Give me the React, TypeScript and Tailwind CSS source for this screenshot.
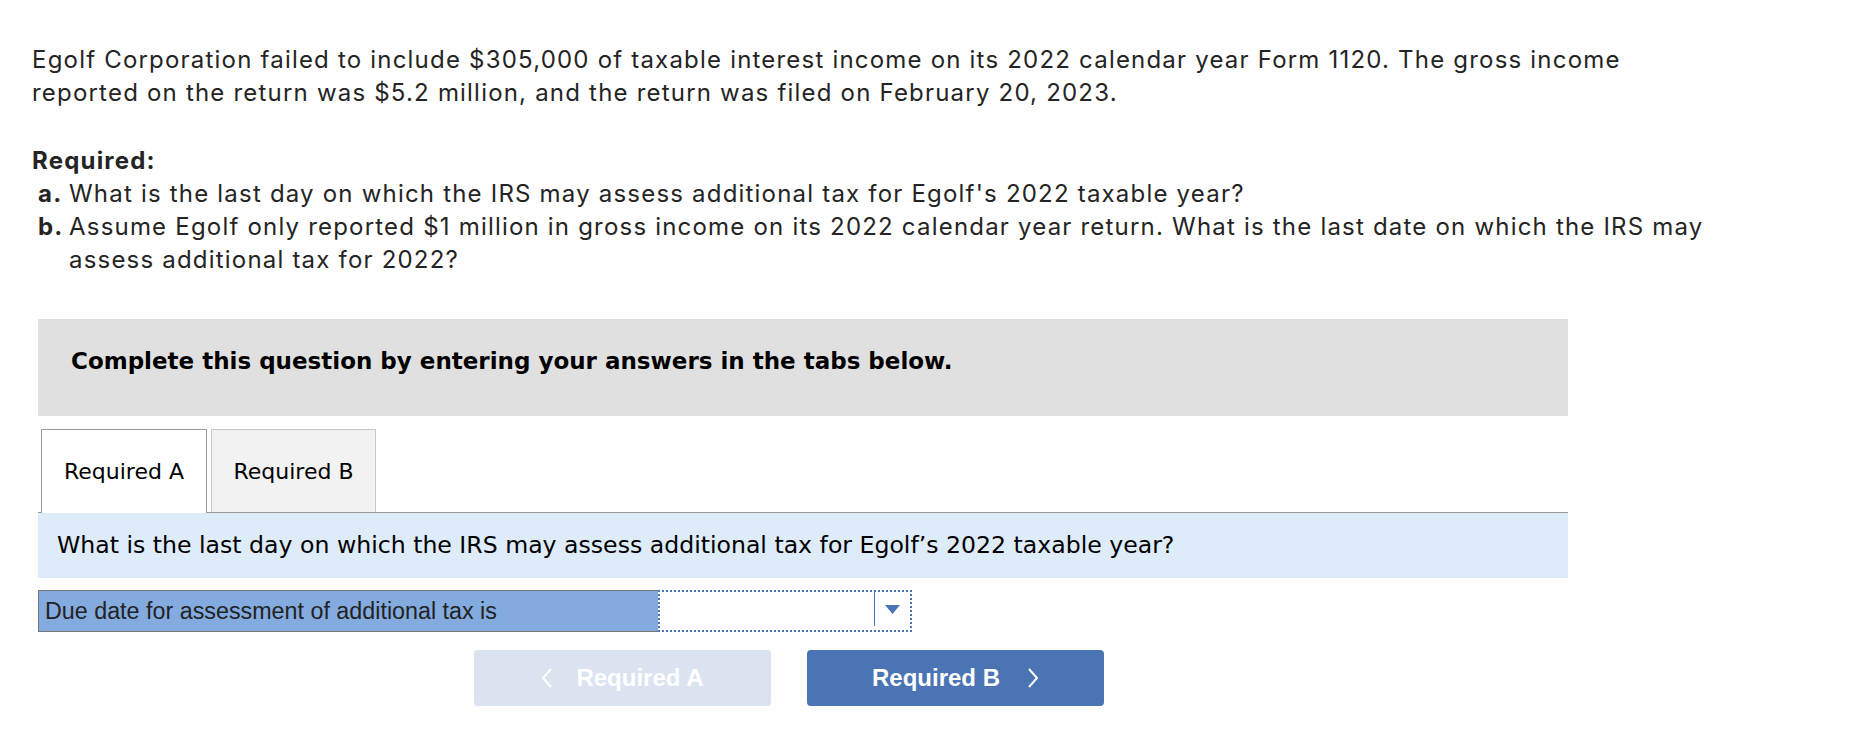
export default function App() {
  return (
    <div className="min-h-screen bg-white pl-[32px] pt-[43px] text-[#242424]">
      {/* question text */}
      <div className="w-[1686px] font-['Inter',sans-serif] text-[24px] leading-[33px] tracking-[1.2px]">
        <p>
          Egolf Corporation failed to include $305,000 of taxable interest income on its 2022 calendar year Form 1120. The gross income
          reported on the return was $5.2 million, and the return was filed on February 20, 2023.
        </p>
        <p className="mt-[35px] font-bold">Required:</p>
        <div className="flex">
          <span className="w-[37px] shrink-0 pl-[6px] font-bold">a.</span>
          <span>What is the last day on which the IRS may assess additional tax for Egolf's 2022 taxable year?</span>
        </div>
        <div className="flex">
          <span className="w-[37px] shrink-0 pl-[6px] font-bold">b.</span>
          <span>
            Assume Egolf only reported $1 million in gross income on its 2022 calendar year return. What is the last date on which the IRS may
            assess additional tax for 2022?
          </span>
        </div>
      </div>

      <div className="ml-[6px] mt-[43px] w-[1530px]">
        <div className="h-[97px] bg-[#e0e0e0] pl-[33px] pt-[27px] font-['DejaVu_Sans',sans-serif] text-[23px] font-bold leading-[30px] text-black">
          Complete this question by entering your answers in the tabs below.
        </div>

        {/* tabs */}
        <div className="mt-[13px] flex items-end gap-[4px] border-b border-[#999] pl-[3px] font-['DejaVu_Sans',sans-serif] text-[22px] text-black">
          <div className="-mb-px flex h-[84px] w-[166px] items-center justify-center border-x border-t border-[#999] bg-white">
            Required A
          </div>
          <div className="flex h-[83px] w-[165px] items-center justify-center border-x border-t border-[#c8c8c8] bg-[#f2f2f2]">
            Required B
          </div>
        </div>

        <div className="flex h-[65px] items-center bg-[#deebf8] pl-[19px] font-['DejaVu_Sans',sans-serif] text-[23.6px] text-black">
          What is the last day on which the IRS may assess additional tax for Egolf’s 2022 taxable year?
        </div>

        {/* answer row */}
        <div className="mt-[12px] flex h-[42px]">
          <div className="flex w-[620px] items-center border border-r-0 border-[#777] bg-[#84abdf] pl-[6px] font-['Liberation_Sans',Arial,sans-serif] text-[23.3px] text-[#222]">
            Due date for assessment of additional tax is
          </div>
          <div className="flex w-[254px] justify-end border-2 border-dotted border-[#4a74b4] bg-white">
            <div className="flex h-[34px] w-[36px] items-center justify-center border-l border-[#4a74b4]">
              <svg width="15" height="9" viewBox="0 0 15 9">
                <polygon points="0,0 15,0 7.5,9" fill="#4a74b4" />
              </svg>
            </div>
          </div>
        </div>

        {/* nav buttons */}
        <div className="ml-[436px] mt-[18px] flex gap-[36px] font-['Liberation_Sans',Arial,sans-serif] text-[24px] font-bold text-white">
          <button className="flex h-[56px] w-[297px] items-center justify-center gap-[24px] rounded-[4px] bg-[#dae3ef]">
            <svg width="11" height="20" viewBox="0 0 11 20">
              <polyline points="10,1 2,10 10,19" fill="none" stroke="white" strokeWidth="2" />
            </svg>
            <span>Required A</span>
          </button>
          <button className="flex h-[56px] w-[297px] items-center justify-center gap-[28px] rounded-[4px] bg-[#4a74b4]">
            <span>Required B</span>
            <svg width="11" height="20" viewBox="0 0 11 20">
              <polyline points="1,1 9,10 1,19" fill="none" stroke="white" strokeWidth="2" />
            </svg>
          </button>
        </div>
      </div>
    </div>
  );
}
